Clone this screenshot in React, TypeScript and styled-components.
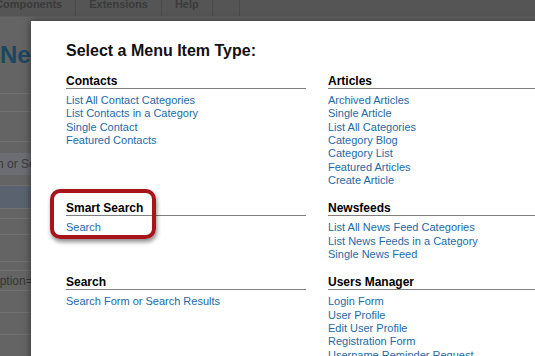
import { FC } from "react";
import styled, { createGlobalStyle } from "styled-components";

const GlobalStyle = createGlobalStyle`
	html, body {
		margin: 0;
		padding: 0;
		background: #646464;
		overflow: hidden;
	}
	* {
		box-sizing: border-box;
	}
`;

const Page = styled.div`
	position: relative;
	width: 535px;
	height: 356px;
	overflow: hidden;
	background: #646464;
	font-family: "Liberation Sans", Arial, Helvetica, sans-serif;
`;

/* dimmed admin page behind the modal */
const Backdrop = styled.div`
	display: flex;
	flex-direction: column;
`;

const MenuBar = styled.div`
	display: flex;
	height: 17px;
	margin-left: -18px;
	background: #555555;
	border-bottom: 1px solid #5d5d5d;
	overflow: hidden;
`;

const MenuItem = styled.div`
	height: 18px;
	margin-top: -2px;
	padding: 0 13px;
	border-right: 1px solid #4a4a4a;
	font-size: 11px;
	font-weight: bold;
	line-height: 12px;
	color: #3a3a3a;
`;

const TitleRow = styled.div`
	height: 77px;
	padding-top: 24px;
	border-bottom: 1px solid #707070;
`;

const PageTitle = styled.h1`
	margin: 0;
	font-size: 24px;
	line-height: 28px;
	font-weight: bold;
	color: #1d4660;
	white-space: nowrap;
`;

const Strip = styled.div<{ $h: number; $bg?: string }>`
	height: ${(p) => p.$h}px;
	background: ${(p) => p.$bg || "transparent"};
	border-bottom: 1px solid #707070;
	display: flex;
	align-items: center;
	font-size: 12px;
	color: #363636;
	white-space: nowrap;
`;

const FilterInput = styled.div`
	height: 22px;
	width: 200px;
	margin-left: -10px;
	padding-left: 7px;
	background: #6b6d72;
	display: flex;
	align-items: center;
	font-size: 12px;
	color: #3a3a3a;
	white-space: nowrap;
`;

const CutText = styled.span<{ $shift: number }>`
	margin-left: ${(p) => p.$shift}px;
`;

/* modal */
const Modal = styled.div`
	position: absolute;
	left: 31px;
	top: 21px;
	width: 620px;
	height: 420px;
	padding: 20px 35px;
	background: #ffffff;
	box-shadow: 0 0 7px rgba(0, 0, 0, 0.55);
`;

const ModalTitle = styled.h2`
	margin: 0 0 13px;
	font-size: 16px;
	line-height: 20px;
	font-weight: bold;
	color: #111111;
`;

const TypeGrid = styled.div`
	display: grid;
	grid-template-columns: 240px 240px;
	column-gap: 22px;
	align-items: start;
`;

const Section = styled.div`
	margin-bottom: 14px;
`;

const SectionTitle = styled.h3`
	margin: 0 0 5px;
	font-size: 12px;
	line-height: 14px;
	font-weight: bold;
	color: #000000;
	border-bottom: 1px solid #7f7f7f;
`;

const LinkList = styled.ul`
	margin: 0;
	padding: 0;
	list-style: none;
`;

const LinkItem = styled.li`
	font-size: 11px;
	line-height: 13.33px;
	white-space: nowrap;

	a {
		color: #1d6aa6;
		text-decoration: none;
	}
`;

const Highlight = styled.div`
	position: absolute;
	left: 50px;
	top: 189px;
	width: 106px;
	height: 50px;
	border: 4.5px solid #a8141c;
	border-radius: 10px;
	box-shadow: 1px 3px 4px rgba(0, 0, 0, 0.45);
`;

interface ISection {
	title: string;
	links: string[];
}

const sections: ISection[] = [
	{
		title: "Contacts",
		links: [
			"List All Contact Categories",
			"List Contacts in a Category",
			"Single Contact",
			"Featured Contacts",
		],
	},
	{
		title: "Articles",
		links: [
			"Archived Articles",
			"Single Article",
			"List All Categories",
			"Category Blog",
			"Category List",
			"Featured Articles",
			"Create Article",
		],
	},
	{ title: "Smart Search", links: ["Search"] },
	{
		title: "Newsfeeds",
		links: [
			"List All News Feed Categories",
			"List News Feeds in a Category",
			"Single News Feed",
		],
	},
	{ title: "Search", links: ["Search Form or Search Results"] },
	{
		title: "Users Manager",
		links: [
			"Login Form",
			"User Profile",
			"Edit User Profile",
			"Registration Form",
			"Username Reminder Request",
			"Password Reset",
		],
	},
];

const App: FC = () => {
	return (
		<Page>
			<GlobalStyle />
			<Backdrop>
				<MenuBar>
					{["Components", "Extensions", "Help"].map((name) => (
						<MenuItem key={name}>{name}</MenuItem>
					))}
					<MenuItem />
				</MenuBar>
				<TitleRow>
					<PageTitle>New Menu Item</PageTitle>
				</TitleRow>
				<Strip $h={18} />
				<Strip $h={30} />
				<Strip $h={44}>
					<FilterInput>n or Search</FilterInput>
				</Strip>
				<Strip $h={23} $bg='#5a6270' />
				<Strip $h={10} />
				<Strip $h={16} />
				<Strip $h={27} />
				<Strip $h={9} />
				<Strip $h={20}>
					<CutText $shift={-7}>option=com_search&amp;view=search</CutText>
				</Strip>
				<Strip $h={22} />
				<Strip $h={22} />
			</Backdrop>

			<Modal>
				<ModalTitle>Select a Menu Item Type:</ModalTitle>
				<TypeGrid>
					{sections.map((s) => (
						<Section key={s.title}>
							<SectionTitle>{s.title}</SectionTitle>
							<LinkList>
								{s.links.map((link) => (
									<LinkItem key={link}>
										<a href='#'>{link}</a>
									</LinkItem>
								))}
							</LinkList>
						</Section>
					))}
				</TypeGrid>
			</Modal>

			<Highlight />
		</Page>
	);
};

export default App;
